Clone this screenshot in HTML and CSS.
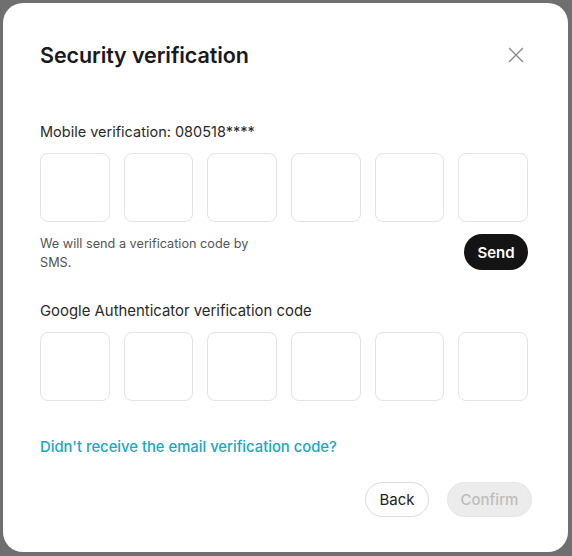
FILE: index.html
```html
<!DOCTYPE html>
<html>
<head>
<meta charset="utf-8">
<link rel="stylesheet" href="styles.css">
</head>
<body>
<div class="backdrop">
  <div class="dialog">
    <div class="header">
      <h1 class="title">Security verification</h1>
      <button class="close" aria-label="Close">
        <svg width="16" height="16" viewBox="0 0 16 16"><path d="M1 1L15 15M15 1L1 15" stroke="#8a8a8a" stroke-width="1.4" fill="none"/></svg>
      </button>
    </div>
    <div class="label first">Mobile verification: 080518****</div>
    <div class="codes">
      <div class="cell"></div><div class="cell"></div><div class="cell"></div>
      <div class="cell"></div><div class="cell"></div><div class="cell"></div>
    </div>
    <div class="send-row">
      <p class="hint">We will send a verification code by SMS.</p>
      <button class="send">Send</button>
    </div>
    <div class="label second">Google Authenticator verification code</div>
    <div class="codes">
      <div class="cell"></div><div class="cell"></div><div class="cell"></div>
      <div class="cell"></div><div class="cell"></div><div class="cell"></div>
    </div>
    <a class="link" href="#">Didn't receive the email verification code?</a>
    <div class="actions">
      <button class="btn back">Back</button>
      <button class="btn confirm">Confirm</button>
    </div>
  </div>
</div>
</body>
</html>
```
FILE: styles.css
```css
* { box-sizing: border-box; }
html, body { margin: 0; padding: 0; }
body {
  width: 572px;
  height: 556px;
  background: #6f6f6f;
  font-family: Inter, "Noto Sans", sans-serif;
  overflow: hidden;
}
.backdrop {
  padding: 3px 4px 4px 3px;
  height: 556px;
}
.dialog {
  background: #fff;
  border-radius: 20px;
  height: 549px;
  padding: 37px 40px 0 37px;
  display: flex;
  flex-direction: column;
}
.header {
  display: flex;
  justify-content: space-between;
  align-items: center;
  height: 30px;
}
.title {
  margin: 0;
  font-size: 21.5px;
  font-weight: 600;
  color: #1a1a1a;
  letter-spacing: -0.1px;
}
.close {
  border: 0;
  background: none;
  padding: 0;
  margin-right: 4px;
  width: 16px;
  height: 16px;
  display: flex;
}
.label {
  color: #2a2a2a;
  line-height: 20px;
}
.label.first { margin-top: 52px; font-size: 14.5px; }
.label.second { margin-top: 29px; font-size: 14.9px; }
.codes {
  display: flex;
  gap: 14px;
  margin-top: 11px;
  width: 488px;
}
.cell {
  flex: 1;
  height: 69px;
  border: 1px solid #e4e4e4;
  border-radius: 8px;
}
.send-row {
  display: flex;
  justify-content: space-between;
  align-items: flex-start;
  width: 488px;
  margin-top: 12px;
}
.hint {
  margin: 0;
  width: 230px;
  font-size: 12.7px;
  line-height: 19px;
  color: #555;
}
.send {
  border: 0;
  background: #141414;
  color: #fff;
  font-family: inherit;
  font-size: 15px;
  font-weight: 600;
  height: 36px;
  width: 64px;
  border-radius: 18px;
  padding: 0;
}
.link {
  margin-top: 36px;
  font-size: 14.8px;
  font-weight: 500;
  color: #18a7c6;
  text-decoration: none;
  line-height: 20px;
}
.actions {
  display: flex;
  justify-content: flex-end;
  gap: 18px;
  margin-top: 25px;
  margin-right: -4px;
}
.btn {
  height: 35px;
  border-radius: 18px;
  font-family: inherit;
  font-size: 15px;
  padding: 0;
}
.back {
  width: 64px;
  background: #fff;
  border: 1px solid #dcdcdc;
  color: #222;
}
.confirm {
  width: 85px;
  background: #ececec;
  border: 1px solid #e6e6e6;
  color: #bdbdbd;
  font-weight: 500;
}
```
